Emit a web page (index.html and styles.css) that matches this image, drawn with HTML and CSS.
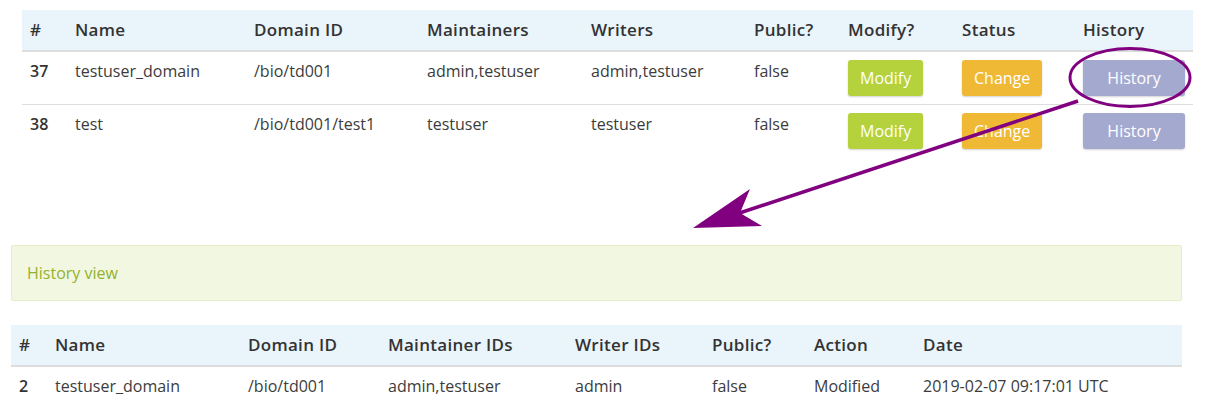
FILE: index.html
```html
<!DOCTYPE html>
<html>
<head>
<meta charset="utf-8">
<link rel="stylesheet" href="styles.css">
</head>
<body>
<div class="page">
  <section class="top">
    <table class="grid grid-top">
      <colgroup>
        <col style="width:45px"><col style="width:179px"><col style="width:173px"><col style="width:164px"><col style="width:163px"><col style="width:94px"><col style="width:114px"><col style="width:121px"><col style="width:118px">
      </colgroup>
      <thead>
        <tr><th>#</th><th>Name</th><th>Domain ID</th><th>Maintainers</th><th>Writers</th><th>Public?</th><th>Modify?</th><th>Status</th><th>History</th></tr>
      </thead>
      <tbody>
        <tr>
          <td class="num">37</td><td>testuser_domain</td><td>/bio/td001</td><td>admin,testuser</td><td>admin,testuser</td><td>false</td>
          <td><span class="btn btn-modify">Modify</span></td>
          <td><span class="btn btn-change">Change</span></td>
          <td><span class="btn btn-history">History</span></td>
        </tr>
        <tr class="sep">
          <td class="num">38</td><td>test</td><td>/bio/td001/test1</td><td>testuser</td><td>testuser</td><td>false</td>
          <td><span class="btn btn-modify">Modify</span></td>
          <td><span class="btn btn-change">Change</span></td>
          <td><span class="btn btn-history">History</span></td>
        </tr>
      </tbody>
    </table>
  </section>

  <section class="bottom">
    <div class="alert">History view</div>
    <table class="grid grid-bottom">
      <colgroup>
        <col style="width:36px"><col style="width:193px"><col style="width:140px"><col style="width:187px"><col style="width:137px"><col style="width:102px"><col style="width:109px"><col style="width:267px">
      </colgroup>
      <thead>
        <tr><th>#</th><th>Name</th><th>Domain ID</th><th>Maintainer IDs</th><th>Writer IDs</th><th>Public?</th><th>Action</th><th>Date</th></tr>
      </thead>
      <tbody>
        <tr>
          <td class="num">2</td><td>testuser_domain</td><td>/bio/td001</td><td>admin,testuser</td><td>admin</td><td>false</td><td>Modified</td><td>2019-02-07 09:17:01 UTC</td>
        </tr>
      </tbody>
    </table>
  </section>

  <svg class="annot" width="1205" height="419" viewBox="0 0 1205 419" xmlns="http://www.w3.org/2000/svg">
    <ellipse cx="1130" cy="77.5" rx="60" ry="29" fill="none" stroke="#800080" stroke-width="3"/>
    <line x1="1078" y1="101" x2="738" y2="213.5" stroke="#800080" stroke-width="3.5"/>
    <polygon points="693,228 750,189 740,213 762,226" fill="#800080"/>
  </svg>
</div>
</body>
</html>
```

FILE: styles.css
```css
html, body {
  margin: 0;
  padding: 0;
  background: #ffffff;
}

.page {
  position: relative;
  width: 1205px;
  height: 419px;
  overflow: hidden;
  font-family: "Open Sans", "Liberation Sans", sans-serif;
  font-size: 16px;
  color: #3c3c3c;
}

.top {
  padding: 10px 0 0 22px;
}

.bottom {
  padding: 88px 0 0 11px;
}

.grid {
  border-collapse: collapse;
  table-layout: fixed;
  width: 1171px;
}

.grid th {
  background: #eaf4fb;
  color: #333333;
  font-weight: 600;
  font-size: 17px;
  letter-spacing: 0.3px;
  text-align: left;
  padding: 8px;
  line-height: 24px;
  height: 24px;
  border-bottom: 2px solid #dddddd;
  white-space: nowrap;
}

.grid td {
  padding: 8px;
  line-height: 22.86px;
  vertical-align: top;
  text-align: left;
  white-space: nowrap;
}

.grid-top td {
  height: 36px;
}

.grid-top tr.sep td {
  border-top: 1px solid #dddddd;
}

.grid td.num {
  font-weight: 600;
  color: #333333;
}

.btn {
  display: inline-block;
  height: 36px;
  line-height: 36px;
  padding: 0 12px;
  border-radius: 3px;
  color: #ffffff;
  font-size: 16px;
  box-shadow: 0 1px 2px rgba(0, 0, 0, 0.18);
}

.btn-modify {
  background: #b5d13c;
}

.btn-change {
  background: #f0b935;
}

.btn-history {
  display: block;
  text-align: center;
  background: #a4a9cf;
}

.alert {
  width: 1139px;
  padding: 15px;
  line-height: 24px;
  background: #f2f7e1;
  border: 1px solid #e6eec5;
  border-radius: 2px;
  color: #94b22c;
  margin-bottom: 24px;
}

.annot {
  position: absolute;
  left: 0;
  top: 0;
  pointer-events: none;
}
```
